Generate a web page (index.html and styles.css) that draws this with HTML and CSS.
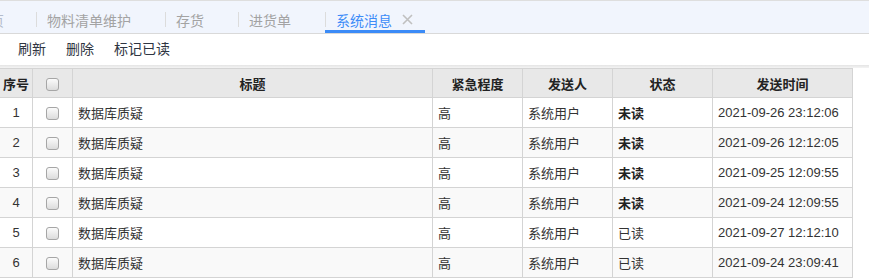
FILE: index.html
```html
<!DOCTYPE html>
<html lang="zh-CN">
<head>
  <meta charset="UTF-8">
  <title>系统消息</title>
  <link rel="stylesheet" href="styles.css">
</head>
<body>
  <div class="tabbar">
    <div class="tab tab-first"><span class="tab-text">首页</span></div>
    <div class="tab"><span class="tab-text">物料清单维护</span><span class="tab-close"></span></div>
    <div class="tab"><span class="tab-text">存货</span><span class="tab-close"></span></div>
    <div class="tab"><span class="tab-text">进货单</span><span class="tab-close"></span></div>
    <div class="tab active">
      <span class="tab-text">系统消息</span>
      <span class="tab-close">
        <svg width="11" height="11" viewBox="0 0 11 11"><path d="M1 1 L10 10 M10 1 L1 10" stroke="#c0c0c0" stroke-width="1.6" fill="none"/></svg>
      </span>
    </div>
  </div>

  <div class="toolbar">
    <span class="tool-btn">刷新</span>
    <span class="tool-btn">删除</span>
    <span class="tool-btn">标记已读</span>
  </div>

  <div class="grid-wrap">
    <table class="grid">
      <colgroup>
        <col style="width: 33px">
        <col style="width: 40px">
        <col style="width: 360px">
        <col style="width: 90px">
        <col style="width: 90px">
        <col style="width: 100px">
        <col style="width: 140px">
      </colgroup>
      <thead>
        <tr>
          <th>序号</th>
          <th><span class="check"></span></th>
          <th>标题</th>
          <th>紧急程度</th>
          <th>发送人</th>
          <th>状态</th>
          <th>发送时间</th>
        </tr>
      </thead>
      <tbody>
        <tr>
          <td class="num">1</td><td class="chk"><span class="check"></span></td>
          <td>数据库质疑</td><td>高</td><td>系统用户</td><td class="unread">未读</td><td>2021-09-26 23:12:06</td>
        </tr>
        <tr>
          <td class="num">2</td><td class="chk"><span class="check"></span></td>
          <td>数据库质疑</td><td>高</td><td>系统用户</td><td class="unread">未读</td><td>2021-09-26 12:12:05</td>
        </tr>
        <tr>
          <td class="num">3</td><td class="chk"><span class="check"></span></td>
          <td>数据库质疑</td><td>高</td><td>系统用户</td><td class="unread">未读</td><td>2021-09-25 12:09:55</td>
        </tr>
        <tr>
          <td class="num">4</td><td class="chk"><span class="check"></span></td>
          <td>数据库质疑</td><td>高</td><td>系统用户</td><td class="unread">未读</td><td>2021-09-24 12:09:55</td>
        </tr>
        <tr>
          <td class="num">5</td><td class="chk"><span class="check"></span></td>
          <td>数据库质疑</td><td>高</td><td>系统用户</td><td>已读</td><td>2021-09-27 12:12:10</td>
        </tr>
        <tr>
          <td class="num">6</td><td class="chk"><span class="check"></span></td>
          <td>数据库质疑</td><td>高</td><td>系统用户</td><td>已读</td><td>2021-09-24 23:09:41</td>
        </tr>
      </tbody>
    </table>
  </div>
</body>
</html>
```

FILE: styles.css
```css
body {
  margin: 0;
  font-family: "Liberation Sans", "Noto Sans CJK SC", sans-serif;
  color: #333;
  background: #fff;
  overflow: hidden;
}
.tabbar {
  display: flex;
  background-color: #f1f5fd;
  border-top: 1px solid #dedede;
  border-bottom: 1px solid #d9d9d9;
  overflow: hidden;
  white-space: nowrap;
}
.tab {
  display: flex;
  align-items: center;
  flex: none;
  height: 21px;
  padding-top: 8px;
  padding-right: 13px;
  border-bottom: 3px solid transparent;
  font-size: 14px;
  color: #a3a3a3;
}
.tab::before {
  content: "";
  width: 1px;
  height: 15px;
  margin-right: 10px;
  background-color: #dcdcdc;
}
.tab-first {
  margin-left: -24px;
  padding-right: 32px;
  color: #b4bccb;
}
.tab-first::before {
  display: none;
}
.tab-close {
  display: inline-flex;
  width: 11px;
  height: 11px;
  margin-left: 10px;
}
.tab.active {
  padding-right: 12px;
  color: #3d8cf8;
  border-bottom-color: #3b8bf7;
}
.toolbar {
  display: flex;
  height: 31px;
  line-height: 31px;
  padding-left: 8px;
  font-size: 14px;
  color: #2f3542;
}
.tool-btn {
  padding: 0 10px;
  cursor: pointer;
}
.grid-wrap {
  padding-top: 3px;
  background: linear-gradient(#e4e4e4, #f4f4f4 3px, #fff 3px);
}
.grid {
  width: 853px;
  table-layout: fixed;
  border-collapse: separate;
  border-spacing: 0;
  border-top: 1px solid #d4d4d4;
  font-size: 13px;
}
.grid th,
.grid td {
  box-sizing: border-box;
  border-right: 1px solid #d4d4d4;
  border-bottom: 1px solid #d4d4d4;
  padding: 0 5px;
  white-space: nowrap;
  overflow: hidden;
}
.grid th {
  height: 29px;
  background-color: #e8e8e8;
  font-weight: bold;
  color: #222;
  text-align: center;
}
.grid th:first-child {
  padding: 0;
}
.grid td {
  height: 30px;
  color: #333;
  text-align: left;
}
.grid tbody tr:nth-child(even) td {
  background-color: #f9f9f9;
}
.grid td.num {
  text-align: center;
  padding: 0;
}
.grid td.chk {
  text-align: center;
  padding: 0;
}
.grid td.unread {
  font-weight: bold;
  color: #222;
}
.check {
  display: inline-block;
  box-sizing: border-box;
  width: 13px;
  height: 13px;
  vertical-align: middle;
  border: 1px solid #a6a6a6;
  border-radius: 3px;
  background: linear-gradient(#fbfbfb, #dcdcdc);
}
```
